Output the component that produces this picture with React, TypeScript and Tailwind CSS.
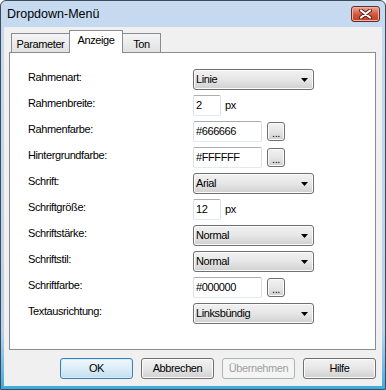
import React from "react";

type Row = { label: string; kind: "select" | "number" | "color"; value: string };

const ROWS: Row[] = [
  { label: "Rahmenart:", kind: "select", value: "Linie" },
  { label: "Rahmenbreite:", kind: "number", value: "2" },
  { label: "Rahmenfarbe:", kind: "color", value: "#666666" },
  { label: "Hintergrundfarbe:", kind: "color", value: "#FFFFFF" },
  { label: "Schrift:", kind: "select", value: "Arial" },
  { label: "Schriftgröße:", kind: "number", value: "12" },
  { label: "Schriftstärke:", kind: "select", value: "Normal" },
  { label: "Schriftstil:", kind: "select", value: "Normal" },
  { label: "Schriftfarbe:", kind: "color", value: "#000000" },
  { label: "Textausrichtung:", kind: "select", value: "Linksbündig" },
];

function Select({ value }: { value: string }) {
  return (
    <div className="w-[121px] h-[21px] rounded-[3px] border border-[#707070] bg-linear-to-b from-[#f2f2f2] via-[#e6e6e6] to-[#d0d0d0] flex items-center justify-between pl-[2px] pr-[5px] shadow-[inset_0_0_0_1px_#fbfbfb]">
      <span className="leading-[13px]">{value}</span>
      <svg width="7" height="4" viewBox="0 0 7 4">
        <path d="M0 0h7L3.5 4z" fill="#000" />
      </svg>
    </div>
  );
}

function TextBox({ value, width }: { value: string; width: string }) {
  return (
    <div
      className={`${width} h-[21px] bg-white border border-t-[#abadb3] border-x-[#dbdfe6] border-b-[#e3e9ef] rounded-[2px] flex items-center pl-[2px] leading-[13px]`}
    >
      {value}
    </div>
  );
}

function DotsButton() {
  return (
    <div className="ml-[5px] mt-[1px] w-[18px] h-[19px] rounded-[3px] border border-[#707070] bg-linear-to-b from-[#f2f2f2] via-[#e6e6e6] to-[#d0d0d0] flex items-end justify-center pb-[2px] shadow-[inset_0_0_0_1px_#fbfbfb]">
      <span className="leading-[9px] text-[11px]">...</span>
    </div>
  );
}

function Control({ row }: { row: Row }) {
  if (row.kind === "select") return <Select value={row.value} />;
  if (row.kind === "number")
    return (
      <div className="flex items-center">
        <TextBox value={row.value} width="w-[28px]" />
        <span className="ml-[4px] leading-[13px]">px</span>
      </div>
    );
  return (
    <div className="flex items-start">
      <TextBox value={row.value} width="w-[69px]" />
      <DotsButton />
    </div>
  );
}

function Button({ label, variant }: { label: string; variant?: "default" | "disabled" }) {
  const base = "w-[73px] h-[21px] rounded-[3px] border flex items-center justify-center leading-[13px]";
  if (variant === "default")
    return (
      <div className={`${base} border-[#3c7fb1] bg-linear-to-b from-[#eef7fc] via-[#dcedf8] to-[#c3def0] shadow-[inset_0_0_0_1px_#d4ecfa]`}>
        {label}
      </div>
    );
  if (variant === "disabled")
    return (
      <div className={`${base} border-[#adb2b5] bg-[#f4f4f4] text-[#a0a0a0]`}>{label}</div>
    );
  return (
    <div className={`${base} border-[#707070] bg-linear-to-b from-[#f2f2f2] via-[#e6e6e6] to-[#d0d0d0] shadow-[inset_0_0_0_1px_#fbfbfb]`}>
      {label}
    </div>
  );
}

export default function App() {
  return (
    <div className="w-[386px] h-[390px] bg-white font-['Liberation_Sans',Arial,sans-serif] text-[11px] tracking-[-0.4px] text-black">
      <div className="w-[386px] h-[390px] rounded-t-[6px] border border-[#3e4a57] bg-linear-to-b from-[#c6daf0] via-[#b7d1ec] via-85% to-[#38ade0] flex flex-col px-[3px] pb-[3px]">
        {/* title bar */}
        <div className="h-[26px] flex items-center justify-between pl-[3px] pr-[2px]">
          <span className="text-[12.5px] tracking-normal leading-[15px] pt-[1px]">Dropdown-Menü</span>
          <div className="w-[29px] h-[16px] mt-[-1px] rounded-[3px] border border-[#6e2a22] bg-linear-to-b from-[#e9a797] via-[#d45a40] to-[#c23c22] flex items-center justify-center shadow-[inset_0_0_0_1px_#eab5a8]">
            <svg width="13" height="10" viewBox="0 0 13 10">
              <path
                d="M2 1.5L11 8.5M11 1.5L2 8.5"
                stroke="#5a2018"
                strokeWidth="4"
                strokeLinecap="round"
              />
              <path
                d="M2 1.5L11 8.5M11 1.5L2 8.5"
                stroke="#ffffff"
                strokeWidth="2.2"
                strokeLinecap="round"
              />
            </svg>
          </div>
        </div>

        {/* client area */}
        <div className="flex-1 bg-[#f0f0f0] flex flex-col pl-[5px] pt-[3px]">
          {/* tabs */}
          <div className="h-[22px] flex items-end pl-[2px]">
            <div className="w-[59px] h-[19px] border border-b-0 border-[#898c95] bg-linear-to-b from-[#f4f4f4] to-[#e2e2e2] flex items-center justify-center leading-[13px] pt-[2px]">
              Parameter
            </div>
            <div className="relative z-10 -ml-[1px] -mb-[1px] w-[54px] h-[23px] border border-b-0 border-[#898c95] bg-white flex items-start justify-center leading-[13px] pt-[3px]">
              Anzeige
            </div>
            <div className="-ml-[1px] w-[39px] h-[19px] border border-b-0 border-[#898c95] bg-linear-to-b from-[#f4f4f4] to-[#e2e2e2] flex items-center justify-center leading-[13px] pt-[2px]">
              Ton
            </div>
          </div>

          {/* panel */}
          <div className="w-[367px] h-[298px] border border-[#898c95] bg-white pt-[16px] pl-[18px]">
            {ROWS.map((row) => (
              <div key={row.label} className="h-[26px] flex items-start">
                <div className="w-[165px] pt-[2px] leading-[13px]">{row.label}</div>
                <Control row={row} />
              </div>
            ))}
          </div>

          {/* buttons */}
          <div className="mt-[8px] w-[367px] flex justify-end gap-[8px] pr-0">
            <Button label="OK" variant="default" />
            <Button label="Abbrechen" />
            <Button label="Übernehmen" variant="disabled" />
            <Button label="Hilfe" />
          </div>
        </div>
      </div>
    </div>
  );
}
